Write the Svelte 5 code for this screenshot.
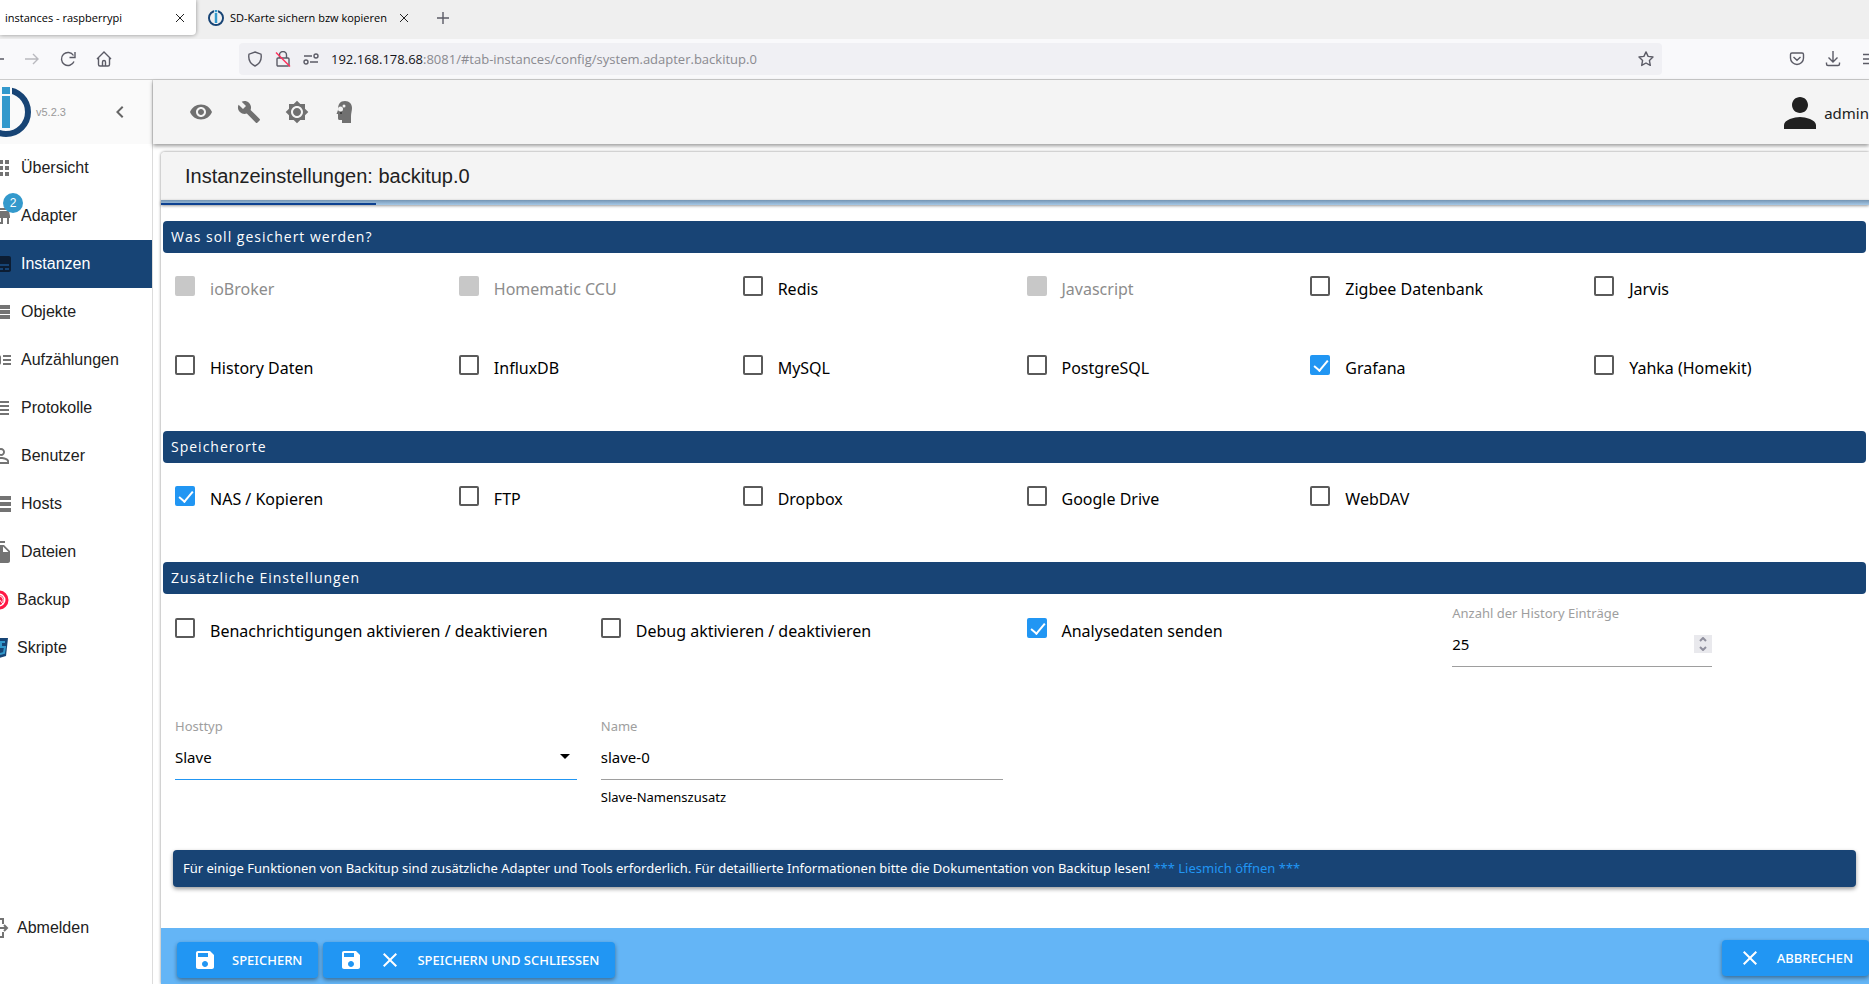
<script lang="ts">
    type Option = { label: string; checked?: boolean; disabled?: boolean };

    const ICONS: Record<string, string> = {
        apps: "M4 8h4V4H4v4zm6 12h4v-4h-4v4zm-6 0h4v-4H4v4zm0-6h4v-4H4v4zm6 0h4v-4h-4v4zm6-10v4h4V4h-4zm-6 4h4V4h-4v4zm6 6h4v-4h-4v4zm0 6h4v-4h-4v4z",
        store: "M20 4H4v2h16V4zm1 10v-2l-1-5H4l-1 5v2h1v6h10v-6h4v6h2v-6h1zm-9 4H6v-4h6v4z",
        subtitles:
            "M20 4H4c-1.1 0-2 .9-2 2v12c0 1.1.9 2 2 2h16c1.1 0 2-.9 2-2V6c0-1.1-.9-2-2-2zM4 12h4v2H4v-2zm10 6H4v-2h10v2zm6 0h-4v-2h4v2zm0-4H10v-2h10v2z",
        list: "M4 14h4v-4H4v4zm0 5h4v-4H4v4zM4 9h4V5H4v4zm5 5h12v-4H9v4zm0 5h12v-4H9v4zM9 5v4h12V5H9z",
        track: "M22 13h-8v-2h8v2zm0-6h-8v2h8V7zm-8 10h8v-2h-8v2zm-2-8v6c0 1.1-.9 2-2 2H4c-1.1 0-2-.9-2-2V9c0-1.1.9-2 2-2h6c1.1 0 2 .9 2 2z",
        headline:
            "M4 15h16v-2H4v2zm0 4h16v-2H4v2zm0-8h16V9H4v2zm0-6v2h16V5H4z",
        personOutline:
            "M12 5.9c1.16 0 2.1.94 2.1 2.1s-.94 2.1-2.1 2.1S9.9 9.16 9.9 8s.94-2.1 2.1-2.1m0 9c2.97 0 6.1 1.46 6.1 2.1v1.1H5.9V17c0-.64 3.13-2.1 6.1-2.1M12 4C9.79 4 8 5.79 8 8s1.79 4 4 4 4-1.79 4-4-1.79-4-4-4zm0 9c-2.67 0-8 1.34-8 4v3h16v-3c0-2.66-5.33-4-8-4z",
        storage:
            "M2 20h20v-4H2v4zm2-3h2v2H4v-2zM2 4v4h20V4H2zm4 3H4V5h2v2zm-4 7h20v-4H2v4zm2-3h2v2H4v-2z",
        files: "M16 1H4c-1.1 0-2 .9-2 2v14h2V3h12V1zm-1 4l6 6v10c0 1.1-.9 2-2 2H7.99C6.89 23 6 22.1 6 21l.01-14c0-1.1.89-2 1.99-2h7zm-1 7h5.5L14 6.5V12z",
        eye: "M12 4.5C7 4.5 2.73 7.61 1 12c1.73 4.39 6 7.5 11 7.5s9.27-3.11 11-7.5c-1.73-4.39-6-7.5-11-7.5zM12 17c-2.76 0-5-2.24-5-5s2.24-5 5-5 5 2.24 5 5-2.24 5-5 5zm0-8c-1.66 0-3 1.34-3 3s1.34 3 3 3 3-1.34 3-3-1.34-3-3-3z",
        build: "M22.7 19l-9.1-9.1c.9-2.3.4-5-1.5-6.9-2-2-5-2.4-7.4-1.3L9 6 6 9 1.6 4.7C.4 7.1.9 10.1 2.9 12.1c1.9 1.9 4.6 2.4 6.9 1.5l9.1 9.1c.4.4 1 .4 1.4 0l2.3-2.3c.5-.4.5-1.1.1-1.4z",
        brightness:
            "M20 8.69V4h-4.69L12 .69 8.69 4H4v4.69L.69 12 4 15.31V20h4.69L12 23.31 15.31 20H20v-4.69L23.31 12 20 8.69zM12 18c-3.31 0-6-2.69-6-6s2.69-6 6-6 6 2.69 6 6-2.69 6-6 6zm0-10c-2.21 0-4 1.79-4 4s1.79 4 4 4 4-1.79 4-4-1.79-4-4-4z",
        person: "M12 12c2.21 0 4-1.79 4-4s-1.79-4-4-4-4 1.79-4 4 1.79 4 4 4zm0 2c-2.67 0-8 1.34-8 4v2h16v-2c0-2.66-5.33-4-8-4z",
        left: "M15.41 7.41L14 6l-6 6 6 6 1.41-1.41L10.83 12z",
        save: "M17 3H5c-1.11 0-2 .9-2 2v14c0 1.1.89 2 2 2h14c1.1 0 2-.9 2-2V7l-4-4zm-5 16c-1.66 0-3-1.34-3-3s1.34-3 3-3 3 1.34 3 3-1.34 3-3 3zm3-10H5V5h10v4z",
        close: "M19 6.41L17.59 5 12 10.59 6.41 5 5 6.41 10.59 12 5 17.59 6.41 19 12 13.41 17.59 19 19 17.59 13.41 12z",
    };

    const NAV = [
        { label: "Übersicht", icon: "apps" },
        { label: "Adapter", icon: "store", badge: 2 },
        { label: "Instanzen", icon: "subtitles", active: true },
        { label: "Objekte", icon: "list" },
        { label: "Aufzählungen", icon: "track" },
        { label: "Protokolle", icon: "headline" },
        { label: "Benutzer", icon: "personOutline" },
        { label: "Hosts", icon: "storage" },
        { label: "Dateien", icon: "files" },
    ];

    let sources: Option[] = $state([
        { label: "ioBroker", disabled: true },
        { label: "Homematic CCU", disabled: true },
        { label: "Redis" },
        { label: "Javascript", disabled: true },
        { label: "Zigbee Datenbank" },
        { label: "Jarvis" },
        { label: "History Daten" },
        { label: "InfluxDB" },
        { label: "MySQL" },
        { label: "PostgreSQL" },
        { label: "Grafana", checked: true },
        { label: "Yahka (Homekit)" },
    ]);

    let targets: Option[] = $state([
        { label: "NAS / Kopieren", checked: true },
        { label: "FTP" },
        { label: "Dropbox" },
        { label: "Google Drive" },
        { label: "WebDAV" },
    ]);

    let extras: Option[] = $state([
        { label: "Benachrichtigungen aktivieren / deaktivieren" },
        { label: "Debug aktivieren / deaktivieren" },
        { label: "Analysedaten senden", checked: true },
    ]);

    let historyCount = $state(25);
    let hostType = $state("Slave");
    let slaveName = $state("slave-0");
</script>

{#snippet icon(name: string, size = 24)}
    <svg width={size} height={size} viewBox="0 0 24 24" fill="currentColor" aria-hidden="true">
        <path d={ICONS[name]} />
    </svg>
{/snippet}

{#snippet option(opt: Option)}
    <label class="option" class:disabled={opt.disabled}>
        <input type="checkbox" bind:checked={opt.checked} disabled={opt.disabled} />
        <span>{opt.label}</span>
    </label>
{/snippet}

{#snippet logo(size: number)}
    <svg width={size} height={size} viewBox="0 0 50 50" aria-hidden="true">
        <circle cx="25" cy="25" r="22" fill="none" stroke="#174475" stroke-width="6" />
        <path fill="#fafafa" d="M19 0h12v43H19z" />
        <path fill="#3399cc" d="M21 0h8v7h-8zM21 9h8v32h-8z" />
    </svg>
{/snippet}

<div class="window">
    <div class="tabs">
        <div class="tab current">
            <span class="tab-title">instances - raspberrypi</span>
            <button class="bare" aria-label="Tab schließen">
                <svg width="10" height="10" viewBox="0 0 10 10"><path d="M1 1l8 8M9 1l-8 8" /></svg>
            </button>
        </div>
        <div class="tab">
            {@render logo(16)}
            <span class="tab-title">SD-Karte sichern bzw kopieren</span>
            <button class="bare" aria-label="Tab schließen">
                <svg width="10" height="10" viewBox="0 0 10 10"><path d="M1 1l8 8M9 1l-8 8" /></svg>
            </button>
        </div>
        <button class="bare new-tab" aria-label="Neuer Tab">
            <svg width="12" height="12" viewBox="0 0 12 12"><path d="M6 0v12M0 6h12" /></svg>
        </button>
    </div>

    <div class="toolbar">
        <button class="bare" aria-label="Zurück">
            <svg width="16" height="16" viewBox="0 0 16 16"><path d="M16 8H2M7 3L2 8l5 5" /></svg>
        </button>
        <button class="bare faded" aria-label="Vor">
            <svg width="16" height="16" viewBox="0 0 16 16"><path d="M1 8h13M9 3l5 5-5 5" /></svg>
        </button>
        <button class="bare" aria-label="Neu laden">
            <svg width="16" height="16" viewBox="0 0 16 16">
                <path d="M14 10.500A6.500 6.500 0 1 1 13.500 4.500M15 1v5.500H9.500" />
            </svg>
        </button>
        <button class="bare" aria-label="Startseite">
            <svg width="16" height="16" viewBox="0 0 16 16">
                <path d="M1 8l7-7 7 7M2.500 7v6.500a1.500 1.500 0 0 0 1.500 1.500h8a1.500 1.500 0 0 0 1.500-1.500V7M6.500 15v-4a1.500 1.500 0 0 1 3 0v4" />
            </svg>
        </button>
        <div class="url">
            <svg width="16" height="16" viewBox="0 0 16 16">
                <path d="M8 1l6 2.200c.9 5-.8 9.300-6 11.800C2.800 12.500 1.100 8.200 2 3.200z" />
            </svg>
            <svg width="16" height="16" viewBox="0 0 16 16">
                <path d="M4.500 7V4a3.500 3.500 0 0 1 7 0v3M3 7h10a1 1 0 0 1 1 1v6a1 1 0 0 1-1 1H3a1 1 0 0 1-1-1V8a1 1 0 0 1 1-1z" />
                <path class="strike" d="M1 1.500l14 14" />
            </svg>
            <svg width="16" height="16" viewBox="0 0 16 16">
                <path d="M1 5h8M7 11h8" />
                <circle cx="13" cy="5" r="2" />
                <circle cx="3" cy="11" r="2" />
            </svg>
            <span class="address">
                <b>192.168.178.68</b>:8081/#tab-instances/config/system.adapter.backitup.0
            </span>
            <svg width="16" height="16" viewBox="0 0 16 16">
                <path d="M8 .900l2.100 4.500 4.900.6-3.600 3.400.9 5-4.300-2.400-4.300 2.400.9-5L1 6l4.900-.6z" stroke-linejoin="round" />
            </svg>
        </div>
        <button class="bare" aria-label="Pocket">
            <svg width="16" height="16" viewBox="0 0 16 16">
                <path d="M3 2h10a1.500 1.500 0 0 1 1.500 1.500V7a6.500 6.500 0 0 1-13 0V3.500A1.500 1.500 0 0 1 3 2zM4.500 6L8 9.300 11.500 6" />
            </svg>
        </button>
        <button class="bare" aria-label="Downloads">
            <svg width="16" height="16" viewBox="0 0 16 16">
                <path d="M8 0v10.500M3.500 6.500L8 11l4.500-4.500M1.500 11.500V13a1.500 1.500 0 0 0 1.500 1.500h10a1.500 1.500 0 0 0 1.500-1.500v-1.500" />
            </svg>
        </button>
        <button class="bare" aria-label="Menü">
            <svg width="16" height="16" viewBox="0 0 16 16"><path d="M2 3.500h13M2 8h13M2 12.500h13" /></svg>
        </button>
    </div>

    <div class="app">
        <aside>
            <div class="brand">
                {@render logo(50)}
                <span class="version">v5.2.3</span>
                <button class="bare collapse" aria-label="Menü einklappen">{@render icon("left")}</button>
            </div>
            <nav>
                {#each NAV as item}
                    <a href="#tab" class:active={item.active}>
                        <span class="nav-icon">
                            {@render icon(item.icon)}
                            {#if item.badge}<span class="badge">{item.badge}</span>{/if}
                        </span>
                        {item.label}
                    </a>
                {/each}
                <a href="#tab-backup">
                    <svg width="20" height="20" viewBox="0 0 20 20" fill="none" stroke-width="3">
                        <circle cx="10" cy="10" r="8" stroke="#ff1744" />
                        <circle cx="10" cy="10" r="5" fill="#ff1744" />
                        <path d="M7 6a5 5 0 0 1 7 6M10 9l4 5" stroke="#fff" stroke-width="1" />
                    </svg>
                    Backup
                </a>
                <a href="#tab-scripts">
                    <svg width="20" height="20" viewBox="0 0 20 20" fill="none">
                        <path d="M1 0h18l-2 18-7 2-7-2z" fill="#174475" />
                        <path d="M16 4h-4v5h4l-1 6-4 1M8 4v10l-3-1" stroke="#3399cc" stroke-width="2" />
                    </svg>
                    Skripte
                </a>
                <a href="#logout" class="logout">
                    <svg width="20" height="20" viewBox="0 0 20 20" fill="none" stroke="#737373" stroke-width="2">
                        <path d="M14 6V1H3v18h11v-5M8 10h10M15 7l3 3-3 3" />
                    </svg>
                    Abmelden
                </a>
            </nav>
        </aside>

        <main>
            <header>
                <button class="bare tool" aria-label="Anzeige">{@render icon("eye")}</button>
                <button class="bare tool" aria-label="Systemeinstellungen">{@render icon("build")}</button>
                <button class="bare tool" aria-label="Farbschema">{@render icon("brightness")}</button>
                <button class="bare tool" aria-label="Expertenmodus">
                    <svg width="24" height="24" viewBox="0 0 24 24" fill="currentColor">
                        <path d="M12 1c4.500 0 7 3 7 7 0 3-1 5-1 8v7H9v-3H6.500C5 20 5 19 5 17v-3H3.500L5 10C5 4 7 1 12 1z" />
                        <circle cx="7.500" cy="9" r="2.500" fill="#f4f4f4" />
                        <circle cx="11" cy="6" r="1.500" fill="#f4f4f4" />
                        <circle cx="8" cy="13" r="1" fill="#333" />
                    </svg>
                </button>
                <div class="user">
                    {@render icon("person", 48)}
                    <span>admin</span>
                </div>
            </header>

            <div class="panel">
                <h1>Instanzeinstellungen: backitup.0</h1>
                <div class="progress"><span></span></div>

                <form onsubmit={(e) => e.preventDefault()}>
                    <h2>Was soll gesichert werden?</h2>
                    <div class="options">
                        {#each sources as opt}
                            {@render option(opt)}
                        {/each}
                    </div>

                    <h2>Speicherorte</h2>
                    <div class="options">
                        {#each targets as opt}
                            {@render option(opt)}
                        {/each}
                    </div>

                    <h2>Zusätzliche Einstellungen</h2>
                    <div class="extras">
                        {#each extras as opt}
                            {@render option(opt)}
                        {/each}
                        <div class="field narrow">
                            <label for="history">Anzahl der History Einträge</label>
                            <div class="control">
                                <input id="history" type="number" bind:value={historyCount} />
                                <span class="spinner">
                                    <svg width="10" height="14" viewBox="0 0 10 14"><path d="M2 4l3-3 3 3M2 10l3 3 3-3" /></svg>
                                </span>
                            </div>
                        </div>
                        <div class="field">
                            <label for="hosttype">Hosttyp</label>
                            <div class="control focused">
                                <select id="hosttype" bind:value={hostType}>
                                    <option>Slave</option>
                                    <option>Master</option>
                                </select>
                                <svg class="caret" width="10" height="5" viewBox="0 0 10 5"><path d="M0 0h10L5 5z" /></svg>
                            </div>
                        </div>
                        <div class="field">
                            <label for="name">Name</label>
                            <div class="control">
                                <input id="name" type="text" bind:value={slaveName} />
                            </div>
                            <span class="helper">Slave-Namenszusatz</span>
                        </div>
                    </div>

                    <p class="notice">
                        Für einige Funktionen von Backitup sind zusätzliche Adapter und Tools erforderlich. Für
                        detaillierte Informationen bitte die Dokumentation von Backitup lesen!
                        <a href="#readme">*** Liesmich öffnen ***</a>
                    </p>
                </form>

                <footer>
                    <button class="action">{@render icon("save")} Speichern</button>
                    <button class="action">
                        {@render icon("save")}
                        {@render icon("close")}
                        Speichern und schliessen
                    </button>
                    <button class="action cancel">{@render icon("close")} Abbrechen</button>
                </footer>
            </div>
        </main>
    </div>
</div>

<style>
    :global(body) {
        margin: 0;
        background: #fff;
    }

    .window {
        display: flex;
        flex-direction: column;
        min-height: 100vh;
        overflow: hidden;
        font-family: "Noto Sans", "Open Sans", sans-serif;
        color: #000;
    }

    .window :global(*) {
        box-sizing: border-box;
    }

    svg {
        display: block;
        flex-shrink: 0;
    }

    .bare {
        display: flex;
        align-items: center;
        justify-content: center;
        padding: 0;
        border: none;
        background: none;
        color: inherit;
        cursor: pointer;
    }

    /* browser chrome */
    .tabs {
        display: flex;
        height: 39px;
        background: #efefef;
    }

    .tabs .bare svg,
    .toolbar svg {
        fill: none;
        stroke: #5b5b66;
        stroke-width: 1.4;
    }

    .tab {
        display: flex;
        align-items: center;
        gap: 6px;
        height: 35px;
        padding: 0 12px;
        font-family: "Open Sans", sans-serif;
        font-size: 11px;
    }

    .tab .bare svg {
        stroke: #222;
        stroke-width: 1;
    }

    .tab .bare {
        margin-left: 6px;
    }

    .tab.current {
        width: 196px;
        padding: 0 11px 0 5px;
        justify-content: space-between;
        background: #fff;
        border-radius: 0 0 4px 0;
        box-shadow: 0 0 4px rgba(0, 0, 0, 0.4);
    }

    .new-tab {
        height: 35px;
        margin-left: 16px;
    }

    .toolbar {
        display: flex;
        align-items: center;
        gap: 20px;
        height: 41px;
        background: #f9f9fb;
        border-bottom: 1px solid #ccc;
        overflow: hidden;
    }

    .toolbar > .bare:first-child {
        margin-left: -12px;
    }

    .toolbar > .bare:last-child {
        margin-right: -8px;
    }

    .faded {
        opacity: 0.4;
    }

    .url {
        display: flex;
        flex: 1;
        align-items: center;
        gap: 12px;
        height: 32px;
        margin: 0 107px;
        padding: 0 8px;
        background: #f0f0f4;
        border-radius: 4px;
    }

    .url .strike {
        stroke: #ff2f5c;
    }

    .address {
        flex: 1;
        font-family: "Open Sans", sans-serif;
        font-size: 13px;
        color: #8a8a90;
    }

    .address b {
        font-weight: 400;
        color: #15141a;
    }

    /* sidebar */
    .app {
        display: flex;
        flex: 1;
    }

    aside {
        display: flex;
        flex-direction: column;
        flex-shrink: 0;
        width: 153px;
        border-right: 1px solid #dcdcdc;
        font-family: "Liberation Sans", Arial, sans-serif;
        overflow: hidden;
    }

    .brand {
        display: flex;
        align-items: center;
        height: 64px;
        padding-right: 20px;
        background: #fafafa;
    }

    .brand :global(svg:first-child) {
        margin-left: -19px;
    }

    .brand .collapse :global(svg) {
        margin: 0;
    }

    .version {
        margin-left: 5px;
        font-size: 11px;
        color: #999;
    }

    .collapse {
        margin-left: auto;
        color: #666;
    }

    nav {
        display: flex;
        flex: 1;
        flex-direction: column;
        padding-bottom: 32px;
    }

    nav a {
        display: flex;
        align-items: center;
        gap: 8px;
        height: 48px;
        margin-left: -11px;
        color: #212121;
        text-decoration: none;
        font-size: 16px;
    }

    nav a.active {
        background: #174475;
        color: #fff;
    }

    .nav-icon {
        position: relative;
        color: #737373;
    }

    .active .nav-icon {
        color: #0c1d33;
    }

    .badge {
        position: absolute;
        top: -11px;
        right: -10px;
        width: 20px;
        height: 20px;
        border-radius: 10px;
        background: #3399cc;
        color: #fff;
        font-size: 12px;
        line-height: 20px;
        text-align: center;
    }

    .logout {
        margin-top: auto;
    }

    /* content */
    main {
        display: flex;
        flex: 1;
        flex-direction: column;
        min-width: 0;
    }

    header {
        position: relative;
        display: flex;
        align-items: center;
        height: 64px;
        padding-left: 24px;
        background: #f4f4f4;
        box-shadow: 0 2px 4px rgba(0, 0, 0, 0.4);
    }

    .tool {
        width: 48px;
        height: 48px;
        color: #707070;
    }

    .user {
        display: flex;
        align-items: center;
        margin: 2px 0 0 auto;
        color: #212121;
        font-size: 15px;
    }

    .panel {
        display: flex;
        flex: 1;
        flex-direction: column;
        margin: 8px 0 0 8px;
        background: #fff;
        border-radius: 4px 0 0 0;
        box-shadow: 0 0 3px rgba(0, 0, 0, 0.5);
    }

    h1 {
        margin: 0;
        padding-left: 24px;
        background: #f4f4f4;
        border-radius: 4px 0 0 0;
        font-family: "Liberation Sans", Arial, sans-serif;
        font-size: 20px;
        font-weight: 400;
        line-height: 48px;
        color: #212121;
    }

    .progress {
        height: 5px;
        padding-top: 3px;
        background: linear-gradient(#7595b3, #a6c8e6);
        box-shadow: 0 1px 3px rgba(0, 0, 0, 0.4);
    }

    .progress span {
        display: block;
        width: 215px;
        height: 2px;
        background: #0d4191;
    }

    form {
        flex: 1;
        padding: 16px 3px 0 2px;
    }

    h2 {
        margin: 0;
        padding: 0 8px;
        background: #184475;
        border-radius: 4px;
        color: #fff;
        font-family: "Open Sans", sans-serif;
        font-size: 14px;
        font-weight: 500;
        letter-spacing: 1px;
        line-height: 32px;
    }

    .options {
        display: grid;
        grid-template-columns: repeat(6, 1fr);
        row-gap: 53px;
        padding: 23px 0 50px;
    }

    .extras {
        display: grid;
        grid-template-columns: repeat(4, 1fr);
        row-gap: 29px;
        padding: 9px 0 43px;
    }

    .option {
        display: flex;
        align-items: flex-start;
        gap: 15px;
        padding-left: 12px;
        font-size: 16px;
        line-height: 26px;
        white-space: nowrap;
    }

    .extras .option {
        padding-top: 15px;
    }

    .option.disabled {
        color: #8c8c8c;
    }

    .option input {
        appearance: none;
        flex-shrink: 0;
        width: 20px;
        height: 20px;
        margin: 0;
        border: 2px solid #5a5a5a;
        border-radius: 2px;
    }

    .option input:checked {
        border-color: #2196f3;
        background: #2196f3;
    }

    .option input:checked::after {
        content: "";
        display: block;
        width: 6px;
        height: 12px;
        margin-left: 5px;
        border: solid #fff;
        border-width: 0 2px 2px 0;
        transform: rotate(40deg);
    }

    .option input:disabled {
        border-color: #c8c8c8;
        background: #c8c8c8;
    }

    .field {
        display: flex;
        flex-direction: column;
        min-height: 84px;
        padding: 0 12px;
        font-size: 13px;
        line-height: 20px;
    }

    .field.narrow {
        width: 284px;
    }

    .field label {
        color: #9e9e9e;
    }

    .control {
        display: flex;
        align-items: center;
        height: 44px;
        padding-bottom: 2px;
        border-bottom: 1px solid #9e9e9e;
    }

    .control.focused {
        border-color: #2196f3;
    }

    .control input,
    .control select {
        appearance: none;
        flex: 1;
        min-width: 0;
        padding: 0;
        border: none;
        outline: none;
        background: none;
        color: #000;
        font: inherit;
        font-size: 15px;
    }

    .control input[type="number"] {
        appearance: textfield;
    }

    .control input::-webkit-inner-spin-button {
        display: none;
    }

    .spinner {
        display: flex;
        align-items: center;
        justify-content: center;
        width: 18px;
        height: 18px;
        background: #e9e9ed;
    }

    .spinner svg {
        fill: none;
        stroke: #8f8f9d;
        stroke-width: 2;
    }

    .caret {
        margin-right: 7px;
    }

    .helper {
        padding-top: 7px;
        font-size: 13px;
    }

    .notice {
        margin: 0 10px 40px;
        padding: 8px 10px;
        background: #184475;
        border-radius: 4px;
        box-shadow: 0 2px 4px rgba(0, 0, 0, 0.4);
        color: #fff;
        font-size: 13px;
        line-height: 21px;
    }

    .notice a {
        color: #2196f3;
        text-decoration: none;
    }

    footer {
        display: flex;
        align-items: flex-end;
        gap: 5px;
        padding: 12px 0 6px 16px;
        background: #64b5f6;
    }

    .action {
        display: flex;
        align-items: center;
        gap: 15px;
        height: 36px;
        padding: 0 16px;
        border: none;
        border-radius: 4px;
        background: #2196f3;
        box-shadow: 0 2px 4px rgba(0, 0, 0, 0.4);
        color: #fff;
        font: inherit;
        font-size: 13px;
        font-weight: 500;
        text-transform: uppercase;
        cursor: pointer;
    }

    .cancel {
        align-self: flex-start;
        margin: 0 0 2px auto;
    }
</style>
